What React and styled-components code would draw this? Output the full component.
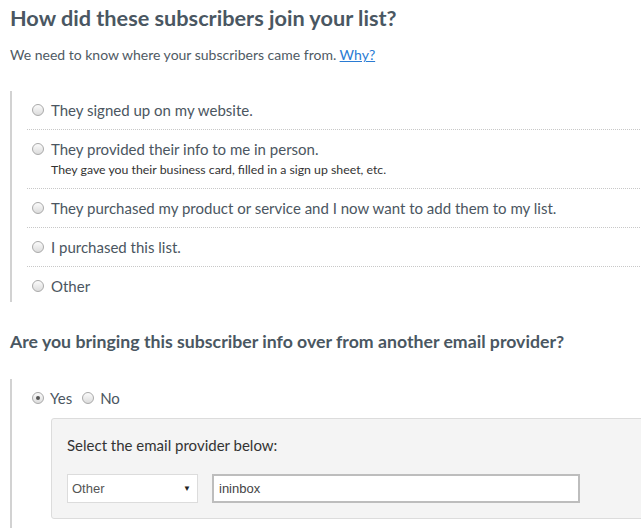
import styled, { createGlobalStyle } from "styled-components";
import { useState } from "react";

const GlobalStyle = createGlobalStyle`
  body {
    margin: 0;
    background: #fff;
    font-family: Lato, "Open Sans", sans-serif;
    color: #4b5661;
  }
`;

const sources = [
  { id: "website", label: "They signed up on my website." },
  {
    id: "person",
    label: "They provided their info to me in person.",
    hint: "They gave you their business card, filled in a sign up sheet, etc.",
  },
  { id: "purchased-product", label: "They purchased my product or service and I now want to add them to my list." },
  { id: "purchased-list", label: "I purchased this list." },
  { id: "other", label: "Other" },
];

const Radio = ({ checked }) => <RadioDot $checked={checked} aria-hidden="true" />;

export default function App() {
  const [source, setSource] = useState(null);
  const [migrating, setMigrating] = useState(true);
  const [provider, setProvider] = useState("Other");
  const [name, setName] = useState("ininbox");

  return (
    <Page>
      <GlobalStyle />
      <Title>How did these subscribers join your list?</Title>
      <Intro>
        We need to know where your subscribers came from. <IntroLink href="#">Why?</IntroLink>
      </Intro>

      <Group>
        {sources.map((s) => (
          <OptionRow key={s.id} onClick={() => setSource(s.id)}>
            <Radio checked={source === s.id} />
            <OptionText>
              <OptionLabel>{s.label}</OptionLabel>
              {s.hint && <OptionHint>{s.hint}</OptionHint>}
            </OptionText>
          </OptionRow>
        ))}
      </Group>

      <Question>Are you bringing this subscriber info over from another email provider?</Question>

      <Group $open>
        <ChoiceRow>
          <Choice onClick={() => setMigrating(true)}>
            <Radio checked={migrating} />
            Yes
          </Choice>
          <Choice onClick={() => setMigrating(false)}>
            <Radio checked={!migrating} />
            No
          </Choice>
        </ChoiceRow>

        {migrating && (
          <ProviderBox>
            <ProviderLabel>Select the email provider below:</ProviderLabel>
            <Fields>
              <SelectWrap>
                <Select value={provider} onChange={(e) => setProvider(e.target.value)}>
                  <option>Other</option>
                  <option>Mailchimp</option>
                  <option>Constant Contact</option>
                  <option>AWeber</option>
                </Select>
                <Arrow>▼</Arrow>
              </SelectWrap>
              <TextInput value={name} onChange={(e) => setName(e.target.value)} />
            </Fields>
          </ProviderBox>
        )}
      </Group>
    </Page>
  );
}

const Page = styled.div`
  padding: 0 0 0 10px;
  width: 660px;
`;

const Title = styled.h1`
  margin: 0;
  padding-top: 3px;
  font-size: 21.7px;
  line-height: 30px;
  font-weight: 700;
  color: #4a5762;
`;

const Intro = styled.p`
  margin: 12px 0 0;
  font-size: 14px;
  line-height: 20px;
  color: #4f5a64;
`;

const IntroLink = styled.a`
  color: #2a7bd3;
  text-decoration: underline;
`;

const Group = styled.div`
  margin-top: ${({ $open }) => ($open ? "25px" : "26px")};
  border-left: 2px solid #d2d2d2;
  padding-left: 15px;
  ${({ $open }) => $open && "padding-bottom: 20px;"}
`;

const OptionRow = styled.div`
  display: flex;
  align-items: flex-start;
  padding: 9px 0 9px 5px;
  border-bottom: 1px dotted #c8c8c8;
  cursor: pointer;

  &:last-child {
    border-bottom: none;
    padding-bottom: 6px;
  }
`;

const RadioDot = styled.span`
  flex: none;
  position: relative;
  width: 10px;
  height: 10px;
  margin: 4px 7px 0 0;
  border: 1px solid #a9a9a9;
  border-radius: 50%;
  background: linear-gradient(#fbfbfb, #dcdcdc);

  &::after {
    content: "";
    display: ${({ $checked }) => ($checked ? "block" : "none")};
    position: absolute;
    left: 3px;
    top: 3px;
    width: 4px;
    height: 4px;
    border-radius: 50%;
    background: #555;
  }
`;

const OptionText = styled.div`
  display: flex;
  flex-direction: column;
`;

const OptionLabel = styled.span`
  font-size: 15px;
  line-height: 20px;
  color: #4b5661;
`;

const OptionHint = styled.span`
  margin-top: 1px;
  font-size: 12.3px;
  line-height: 19px;
  color: #333;
`;

const Question = styled.h2`
  margin: 28px 0 0;
  font-size: 17.7px;
  line-height: 24px;
  font-weight: 700;
  color: #4a5762;
`;

const ChoiceRow = styled.div`
  display: flex;
  gap: 10px;
  padding: 9px 0 0 5px;
`;

const Choice = styled.label`
  display: flex;
  align-items: flex-start;
  font-size: 15px;
  line-height: 20px;
  color: #4b5661;
  cursor: pointer;

  ${RadioDot} {
    margin-right: 6px;
  }
`;

const ProviderBox = styled.div`
  margin: 10px 0 0 24px;
  padding: 16px 15px 15px;
  background: #f4f4f4;
  border: 1px solid #dcdcdc;
  border-radius: 3px;
`;

const ProviderLabel = styled.div`
  font-size: 15px;
  line-height: 20px;
  color: #333;
`;

const Fields = styled.div`
  display: flex;
  gap: 14px;
  margin-top: 19px;
`;

const SelectWrap = styled.div`
  position: relative;
  width: 131px;
  height: 29px;
`;

const Select = styled.select`
  appearance: none;
  width: 100%;
  height: 100%;
  padding: 0 0 0 4px;
  border: 1px solid #dcdcdc;
  border-radius: 0;
  background: #fff;
  font-family: "Liberation Sans", Arial, sans-serif;
  font-size: 13px;
  color: #555;
  outline: none;
`;

const Arrow = styled.span`
  position: absolute;
  right: 7px;
  top: 9px;
  font-size: 8px;
  line-height: 10px;
  color: #222;
  pointer-events: none;
`;

const TextInput = styled.input`
  width: 368px;
  height: 29px;
  box-sizing: border-box;
  padding: 0 5px;
  border: 2px solid #bdbdbd;
  background: #fff;
  font-family: "Liberation Sans", Arial, sans-serif;
  font-size: 13px;
  color: #444;
  outline: none;
`;
